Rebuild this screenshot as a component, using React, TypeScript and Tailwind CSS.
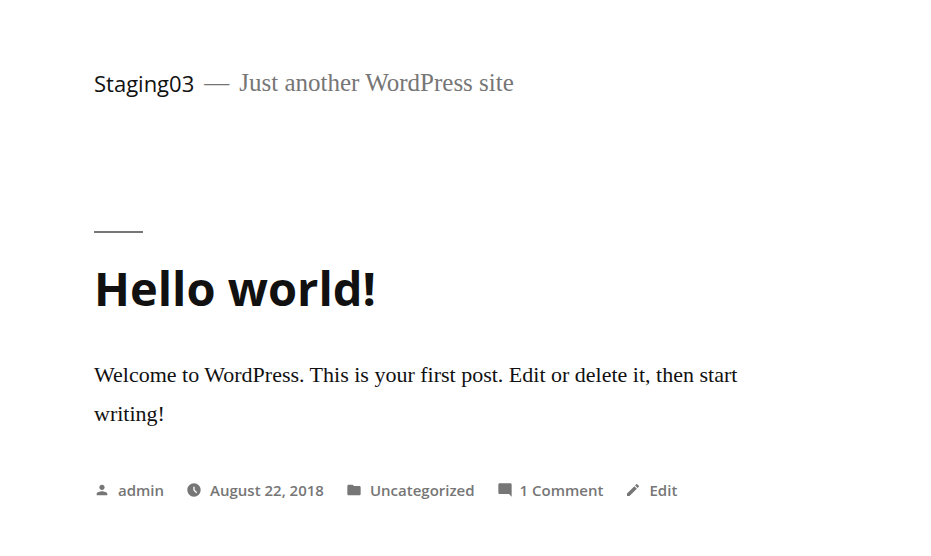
const metaFont = "font-['Open_Sans','Noto_Sans',sans-serif]";

function MetaItem({ d, label, iconClass }: { d: string; label: string; iconClass: string }) {
  return (
    <span className="flex items-center">
      <svg viewBox="0 0 24 24" className={`h-4 w-4 shrink-0 fill-[#767676] ${iconClass}`}>
        <path d={d} />
      </svg>
      <span>{label}</span>
    </span>
  );
}

export default function App() {
  return (
    <div className="h-[556px] w-[931px] overflow-hidden bg-white pl-[94px] font-['Liberation_Serif',serif]">
      {/* Site header */}
      <header className="flex h-[166px] items-start pt-[66px]">
        <span className={`text-[22px] leading-[34px] text-[#111] ${metaFont}`}>Staging03</span>
        <span className="ml-[10px] text-[25px] leading-[34px] text-[#767676]">—</span>
        <span className="ml-[10px] text-[25px] leading-[34px] text-[#767676]">Just another WordPress site</span>
      </header>

      {/* Post */}
      <main>
        <div className="mt-[65px] h-[2px] w-[49px] bg-[#767676]" />
        <h1 className={`mt-[21px] text-[47px] font-bold leading-[68px] text-[#111] ${metaFont}`}>Hello world!</h1>
        <p className="mt-[33px] w-[660px] text-[22px] leading-[39px] text-[#111]">
          Welcome to WordPress. This is your first post. Edit or delete it, then start writing!
        </p>
        <footer className={`mt-[45px] flex items-center text-[15px] font-semibold leading-6 text-[#767676] ${metaFont}`}>
          <MetaItem
            iconClass="mr-[8px]"
            label="admin"
            d="M12 12c2.21 0 4-1.79 4-4s-1.79-4-4-4-4 1.79-4 4 1.79 4 4 4zm0 2c-2.67 0-8 1.34-8 4v2h16v-2c0-2.66-5.33-4-8-4z"
          />
          <span className="w-[22px]" />
          <MetaItem
            iconClass="mr-[8px]"
            label="August 22, 2018"
            d="M11.99 2C6.47 2 2 6.48 2 12s4.47 10 9.99 10C17.52 22 22 17.52 22 12S17.52 2 11.99 2zm3.3 14.71L11 12.41V7h2v4.59l3.71 3.71-1.42 1.41z"
          />
          <span className="w-[22px]" />
          <MetaItem
            iconClass="mr-[8px]"
            label="Uncategorized"
            d="M10 4H4c-1.1 0-1.99.9-1.99 2L2 18c0 1.1.9 2 2 2h16c1.1 0 2-.9 2-2V8c0-1.1-.9-2-2-2h-8l-2-2z"
          />
          <span className="w-[22px]" />
          <MetaItem
            iconClass="mr-[7px]"
            label="1 Comment"
            d="M21.99 4c0-1.1-.89-2-1.99-2H4c-1.1 0-2 .9-2 2v12c0 1.1.9 2 2 2h14l4 4-.01-18z"
          />
          <span className="w-[22px]" />
          <MetaItem
            iconClass="mr-[8px]"
            label="Edit"
            d="M3 17.25V21h3.75L17.81 9.94l-3.75-3.75L3 17.25zM20.71 7.04c.39-.39.39-1.02 0-1.41l-2.34-2.34c-.39-.39-1.02-.39-1.41 0l-1.83 1.83 3.75 3.75 1.83-1.83z"
          />
        </footer>
      </main>
    </div>
  );
}
